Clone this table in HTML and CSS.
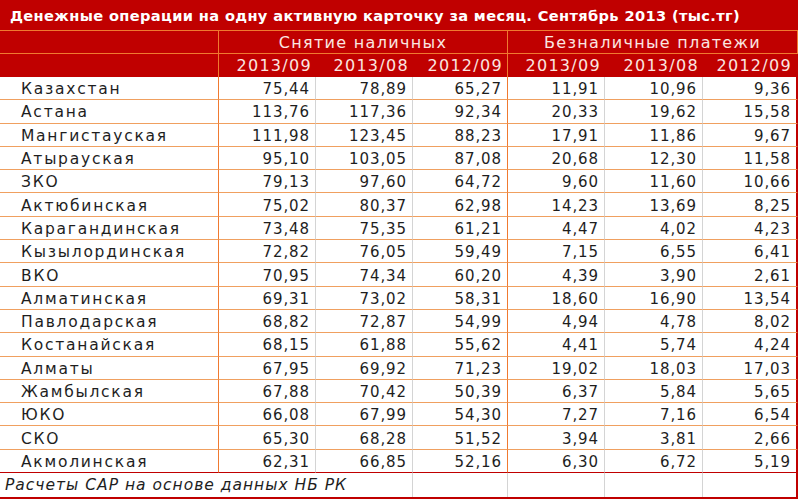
FILE: index.html
```html
<!DOCTYPE html>
<html lang="ru">
<head>
<meta charset="utf-8">
<link rel="stylesheet" href="styles.css">
</head>
<body>
<div class="sheet">
  <div class="title">Денежные операции на одну активную карточку за месяц. Сентябрь 2013 (тыс.тг)</div>
  <div class="grid">
    <div class="h h1 first"></div>
    <div class="h h1 group">Снятие наличных</div>
    <div class="h h1 group">Безналичные платежи</div>
    <div class="h h2 first"></div>
    <div class="h h2 yr">2013/09</div>
    <div class="h h2 yr">2013/08</div>
    <div class="h h2 yr gend">2012/09</div>
    <div class="h h2 yr">2013/09</div>
    <div class="h h2 yr">2013/08</div>
    <div class="h h2 yr gend">2012/09</div>
  </div>
  <div class="grid body" id="body"></div>
  <div class="grid foot">
    <div class="f fnote">Расчеты САР на основе данных НБ РК</div>
    <div class="f"></div>
    <div class="f"></div>
    <div class="f"></div>
    <div class="f fend"></div>
  </div>
</div>
<script src="app.js"></script>
</body>
</html>
```

FILE: app.js
```js
const rows = [
  ["Казахстан","75,44","78,89","65,27","11,91","10,96","9,36"],
  ["Астана","113,76","117,36","92,34","20,33","19,62","15,58"],
  ["Мангистауская","111,98","123,45","88,23","17,91","11,86","9,67"],
  ["Атырауская","95,10","103,05","87,08","20,68","12,30","11,58"],
  ["ЗКО","79,13","97,60","64,72","9,60","11,60","10,66"],
  ["Актюбинская","75,02","80,37","62,98","14,23","13,69","8,25"],
  ["Карагандинская","73,48","75,35","61,21","4,47","4,02","4,23"],
  ["Кызылординская","72,82","76,05","59,49","7,15","6,55","6,41"],
  ["ВКО","70,95","74,34","60,20","4,39","3,90","2,61"],
  ["Алматинская","69,31","73,02","58,31","18,60","16,90","13,54"],
  ["Павлодарская","68,82","72,87","54,99","4,94","4,78","8,02"],
  ["Костанайская","68,15","61,88","55,62","4,41","5,74","4,24"],
  ["Алматы","67,95","69,92","71,23","19,02","18,03","17,03"],
  ["Жамбылская","67,88","70,42","50,39","6,37","5,84","5,65"],
  ["ЮКО","66,08","67,99","54,30","7,27","7,16","6,54"],
  ["СКО","65,30","68,28","51,52","3,94","3,81","2,66"],
  ["Акмолинская","62,31","66,85","52,16","6,30","6,72","5,19"]
];
const body = document.getElementById("body");
rows.forEach((r, i) => {
  r.forEach((v, j) => {
    const d = document.createElement("div");
    let cls = "c";
    if (j === 0) cls += " name";
    else cls += " num";
    if (j === 3) cls += " gend";
    if (j === 6) cls += " last";
    if (i === rows.length - 1) cls += " lastrow";
    d.className = cls;
    d.textContent = v;
    body.appendChild(d);
  });
});
```

FILE: styles.css
```css
html, body {
  margin: 0;
  padding: 0;
  background: #ffffff;
}
.sheet {
  width: 798px;
  font-family: "DejaVu Sans", Verdana, sans-serif;
}
.title {
  height: 30px;
  background: #c00000;
  color: #ffffff;
  font-weight: bold;
  font-size: 14.6px;
  line-height: 31px;
  padding-left: 10px;
  letter-spacing: 0.36px;
  border-bottom: 1px solid #f07a30;
  white-space: nowrap;
}
.grid {
  display: grid;
  grid-template-columns: 219px 97px 97px 95px 97px 98px 95px;
}
.h {
  background: #c00000;
  color: #fbe6e0;
  font-size: 16px;
  letter-spacing: 1.3px;
  box-sizing: border-box;
  white-space: nowrap;
}
.h1 {
  height: 23px;
  line-height: 24px;
  border-bottom: 1px solid #f07a30;
}
.h2 {
  height: 23px;
  line-height: 24px;
}
.h.first {
  border-right: 1px solid #f07a30;
}
.h1.group {
  grid-column: span 3;
  text-align: center;
  border-right: 1px solid #f07a30;
}
.h1.group:last-child {
  border-right: 2px solid #c00000;
}
.yr {
  text-align: right;
  padding-right: 4px;
}
.yr.gend {
  border-right: 1px solid #f07a30;
}
.yr:last-child {
  border-right: 2px solid #c00000;
}
.body {
  grid-auto-rows: 23.3px;
}
.c {
  box-sizing: border-box;
  font-size: 15px;
  letter-spacing: 0.9px;
  color: #1e1e1e;
  border-bottom: 1px solid #f0a060;
  white-space: nowrap;
  display: flex;
  align-items: center;
  padding-top: 2px;
}
.name {
  padding-left: 21px;
  font-size: 15.5px;
  letter-spacing: 1.75px;
  border-right: 1px solid #f07a30;
}
.num {
  justify-content: flex-end;
  padding-right: 5px;
  border-right: 1px solid #d4d4d4;
}
.num.gend {
  border-right: 1px solid #f07a30;
}
.num.last {
  border-right: 2px solid #c00000;
}
.c.lastrow {
  border-bottom: 1px solid #c00000;
}
.foot {
  height: 24px;
  border-bottom: 2px solid #c00000;
}
.f {
  box-sizing: border-box;
  border-right: 1px solid #d4d4d4;
}
.fnote {
  grid-column: span 3;
  font-style: italic;
  font-size: 15.5px;
  letter-spacing: 1px;
  color: #1e1e1e;
  padding-left: 5px;
  line-height: 24px;
  white-space: nowrap;
}
.fend {
  border-right: 2px solid #c00000;
}
```
